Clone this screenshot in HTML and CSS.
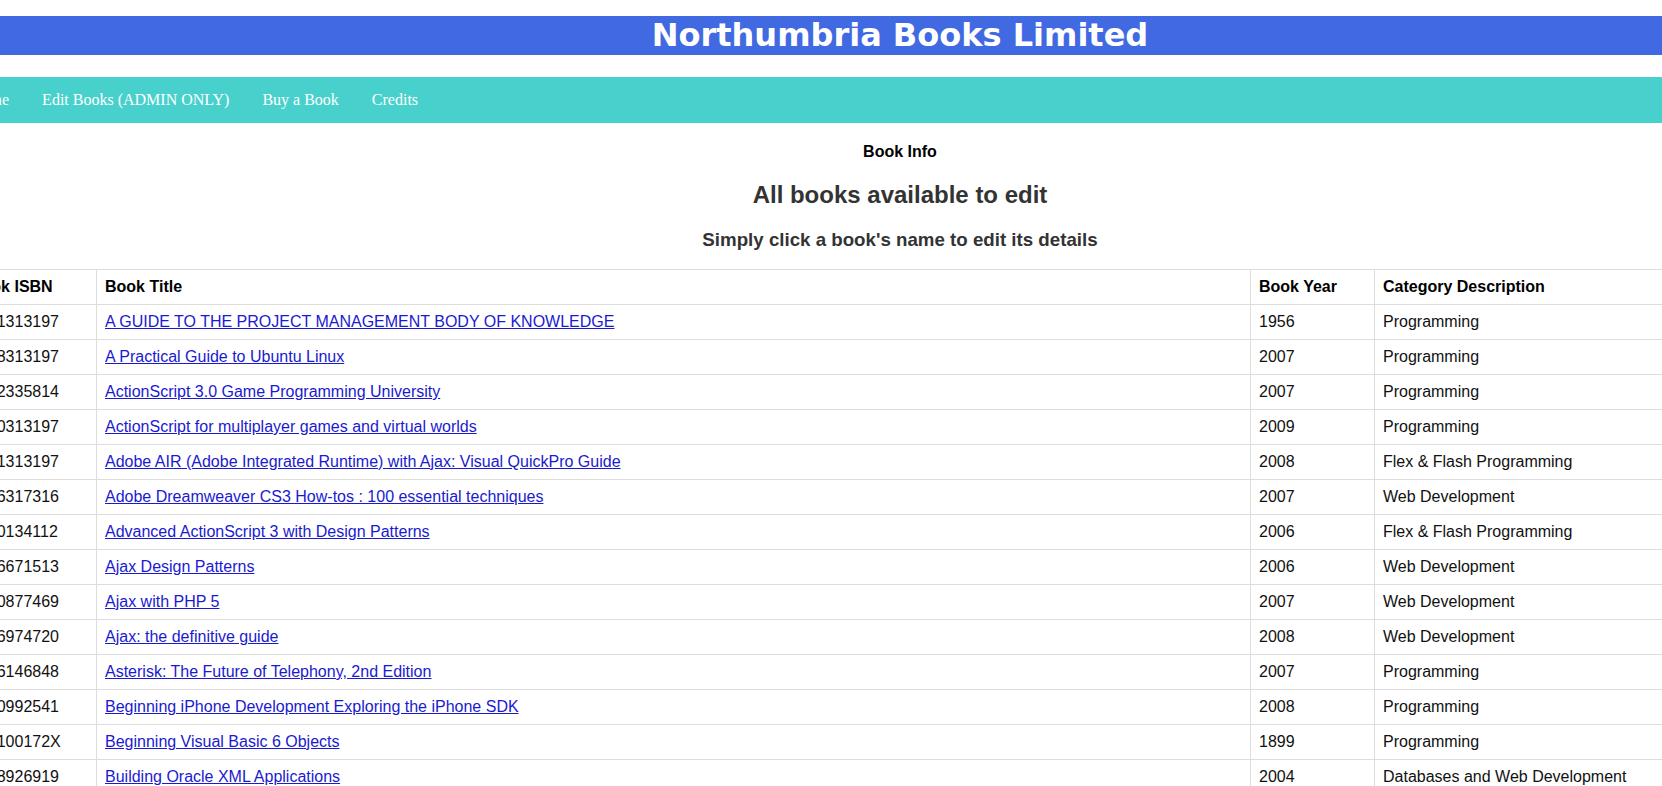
FILE: index.html
```html
<!DOCTYPE html>
<html lang="en">
<head>
<meta charset="utf-8">
<title>Northumbria Books Limited - Edit Books</title>
<link rel="stylesheet" href="styles.css">
</head>
<body>
<div class="page">
  <h1 class="banner">Northumbria Books Limited</h1>
  <nav class="nav">
    <a href="#">Home</a>
    <a href="#">Edit Books (ADMIN ONLY)</a>
    <a href="#">Buy a Book</a>
    <a href="#">Credits</a>
  </nav>
  <main class="content">
    <p class="section-label">Book Info</p>
    <h2 class="title">All books available to edit</h2>
    <h3 class="subtitle">Simply click a book's name to edit its details</h3>
    <table class="books">
      <colgroup>
        <col class="c-isbn"><col class="c-title"><col class="c-year"><col class="c-cat">
      </colgroup>
      <thead>
        <tr><th>Book ISBN</th><th>Book Title</th><th>Book Year</th><th>Category Description</th></tr>
      </thead>
      <tbody>
        <tr><td>0321313197</td><td><a href="#">A GUIDE TO THE PROJECT MANAGEMENT BODY OF KNOWLEDGE</a></td><td>1956</td><td>Programming</td></tr>
        <tr><td>0618313197</td><td><a href="#">A Practical Guide to Ubuntu Linux</a></td><td>2007</td><td>Programming</td></tr>
        <tr><td>0672335814</td><td><a href="#">ActionScript 3.0 Game Programming University</a></td><td>2007</td><td>Programming</td></tr>
        <tr><td>0470313197</td><td><a href="#">ActionScript for multiplayer games and virtual worlds</a></td><td>2009</td><td>Programming</td></tr>
        <tr><td>0321313197</td><td><a href="#">Adobe AIR (Adobe Integrated Runtime) with Ajax: Visual QuickPro Guide</a></td><td>2008</td><td>Flex &amp; Flash Programming</td></tr>
        <tr><td>0596317316</td><td><a href="#">Adobe Dreamweaver CS3 How-tos : 100 essential techniques</a></td><td>2007</td><td>Web Development</td></tr>
        <tr><td>1590134112</td><td><a href="#">Advanced ActionScript 3 with Design Patterns</a></td><td>2006</td><td>Flex &amp; Flash Programming</td></tr>
        <tr><td>0596671513</td><td><a href="#">Ajax Design Patterns</a></td><td>2006</td><td>Web Development</td></tr>
        <tr><td>1590877469</td><td><a href="#">Ajax with PHP 5</a></td><td>2007</td><td>Web Development</td></tr>
        <tr><td>0596974720</td><td><a href="#">Ajax: the definitive guide</a></td><td>2008</td><td>Web Development</td></tr>
        <tr><td>0596146848</td><td><a href="#">Asterisk: The Future of Telephony, 2nd Edition</a></td><td>2007</td><td>Programming</td></tr>
        <tr><td>1430992541</td><td><a href="#">Beginning iPhone Development Exploring the iPhone SDK</a></td><td>2008</td><td>Programming</td></tr>
        <tr><td>186100172X</td><td><a href="#">Beginning Visual Basic 6 Objects</a></td><td>1899</td><td>Programming</td></tr>
        <tr><td>0078926919</td><td><a href="#">Building Oracle XML Applications</a></td><td>2004</td><td>Databases and Web Development</td></tr>
      </tbody>
    </table>
  </main>
</div>
</body>
</html>
```

FILE: styles.css
```css
html {
  scrollbar-width: none;
}
body {
  margin: 0;
  overflow-x: hidden;
  background: #ffffff;
  font-family: "Liberation Sans", Arial, sans-serif;
  color: #000;
}
.page {
  width: 1878px;
  margin-left: -39px;
  padding-top: 16px;
}
.banner {
  margin: 0;
  height: 39px;
  line-height: 39px;
  background: #4169e1;
  color: #ffffff;
  text-align: center;
  font-family: "DejaVu Sans", Verdana, sans-serif;
  font-weight: bold;
  font-size: 32px;
}
.nav {
  margin-top: 22px;
  height: 46px;
  display: flex;
  align-items: center;
  gap: 33px;
  padding-left: 9px;
  background: #48d1cc;
}
.nav a {
  color: #ffffff;
  text-decoration: none;
  font-family: "Liberation Serif", "Times New Roman", serif;
  font-size: 16px;
}
.content {
  text-align: center;
}
.section-label {
  margin: 20px 0 0;
  font-size: 16px;
  font-weight: bold;
  color: #000;
}
.title {
  margin: 20px 0 0;
  font-size: 24px;
  font-weight: bold;
  color: #333;
}
.subtitle {
  margin: 20px 0 0;
  font-size: 18.72px;
  font-weight: bold;
  color: #333;
}
.books {
  margin-top: 18px;
  width: 100%;
  border-collapse: collapse;
  table-layout: fixed;
  text-align: left;
  font-size: 16px;
}
.c-isbn { width: 135px; }
.c-title { width: 1154px; }
.c-year { width: 124px; }
.c-cat { width: 465px; }
.books th,
.books td {
  border: 1px solid #dddddd;
  padding: 8px;
  line-height: 18px;
  color: #111;
  white-space: nowrap;
}
.books th {
  font-weight: bold;
  color: #000;
}
.books a {
  color: #1a1ad0;
  text-decoration: underline;
}
```
